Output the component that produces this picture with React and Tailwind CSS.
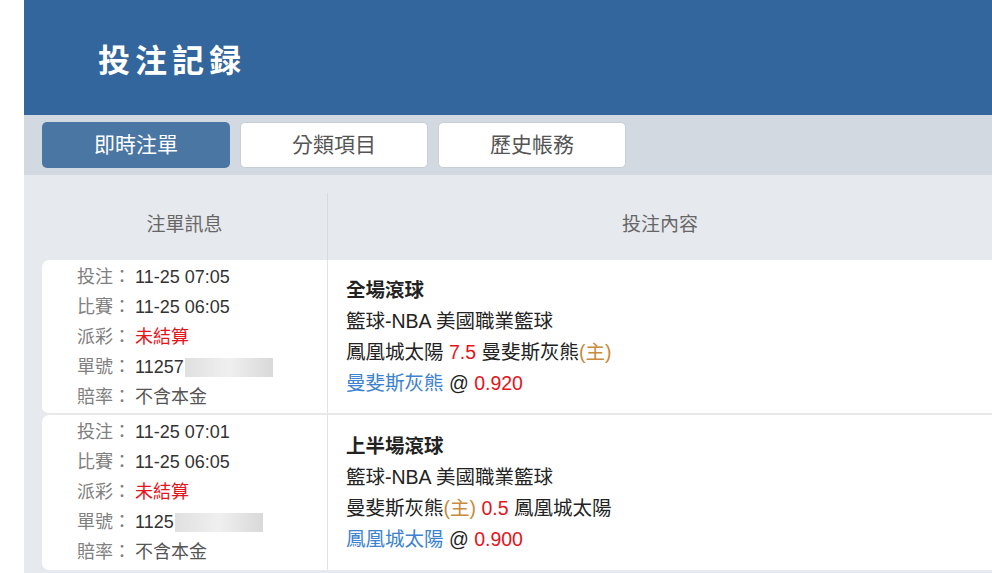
import React from 'react';

const FONT = { fontFamily: '"Liberation Sans", "Noto Sans CJK TC", sans-serif' };

const bets = [
    {
        placed: '11-25 07:05',
        match: '11-25 06:05',
        ticket: '11257',
        title: '全場滾球',
        league: '籃球-NBA 美國職業籃球',
        line: [['t', '鳳凰城太陽 '], ['r', '7.5'], ['t', ' 曼斐斯灰熊'], ['o', '(主)']],
        pick: '曼斐斯灰熊',
        odds: '0.920',
    },
    {
        placed: '11-25 07:01',
        match: '11-25 06:05',
        ticket: '1125',
        title: '上半場滾球',
        league: '籃球-NBA 美國職業籃球',
        line: [['t', '曼斐斯灰熊'], ['o', '(主)'], ['r', ' 0.5'], ['t', ' 鳳凰城太陽']],
        pick: '鳳凰城太陽',
        odds: '0.900',
    },
];

const tone = { t: 'text-[#222]', r: 'text-[#e4141b]', o: 'text-[#c98a3c]' };

const InfoLine = ({ label, children }) => (
    <div className="flex h-[30px] items-center">
        <span className="text-[#808080] w-[58px] shrink-0">{label}：</span>
        {children}
    </div>
);

const BetRow = ({ bet }) => (
    <div className="flex bg-white rounded-l-[7px] h-[155px] border-b-2 border-[#e9e9e9] last:border-b-0">
        <div className="w-[286px] shrink-0 border-r border-[#e3e3e3] pl-[35px] pt-[2px] text-[18px]">
            <InfoLine label="投注"><span className="text-[#333]">{bet.placed}</span></InfoLine>
            <InfoLine label="比賽"><span className="text-[#333]">{bet.match}</span></InfoLine>
            <InfoLine label="派彩"><span className="text-[#e4141b]">未結算</span></InfoLine>
            <InfoLine label="單號">
                <span className="text-[#333]">{bet.ticket}</span>
                {/* blurred ticket number */}
                <span className="ml-[1px] h-[19px] w-[88px] bg-gradient-to-r from-[#d8d8d8] via-[#ececec] to-[#cfcfcf] opacity-80" />
            </InfoLine>
            <InfoLine label="賠率"><span className="text-[#555]">不含本金</span></InfoLine>
        </div>
        <div className="flex-1 flex flex-col justify-center pl-[18px] text-[19.5px] leading-[31px] text-[#222]">
            <div className="font-bold">{bet.title}</div>
            <div>{bet.league}</div>
            <div>
                {bet.line.map(([k, s], i) => (
                    <span key={i} className={tone[k]}>{s}</span>
                ))}
            </div>
            <div>
                <span className="text-[#3b82d0]">{bet.pick}</span>
                <span className="text-[#222]"> @ </span>
                <span className="text-[#e4141b]">{bet.odds}</span>
            </div>
        </div>
    </div>
);

export default function App() {
    const tabs = ['即時注單', '分類項目', '歷史帳務'];
    return (
        <div className="min-h-screen bg-white pl-[24px] overflow-hidden" style={FONT}>
            <header className="h-[115px] bg-[#33669d] flex items-center pl-[74px]">
                <h1 className="text-white text-[32px] font-bold tracking-[5px]" style={{ fontFamily: '"Noto Sans CJK TC", serif' }}>投注記録</h1>
            </header>

            <div className="h-[60px] bg-[#d3d9e1] flex items-center gap-[10px] pl-[18px]">
                {tabs.map((t, i) => (
                    <div
                        key={t}
                        className={`w-[188px] h-[46px] flex items-center justify-center rounded-[5px] text-[21px] ${i === 0 ? 'bg-[#4a76a3] text-white' : 'bg-white border border-[#c9ced6] text-[#555]'}`}
                    >
                        {t}
                    </div>
                ))}
            </div>

            <div className="bg-[#e6e9ee] pl-[18px] pt-[18px] min-h-[400px]">
                <div className="flex h-[67px] text-[19px] text-[#666]">
                    <div className="w-[286px] shrink-0 border-r border-[#d6dae0] flex items-center justify-center pb-[2px]">注單訊息</div>
                    <div className="flex-1 flex items-center justify-center pb-[2px]">投注內容</div>
                </div>
                {bets.map((b, i) => <BetRow key={i} bet={b} />)}
            </div>
        </div>
    );
}
